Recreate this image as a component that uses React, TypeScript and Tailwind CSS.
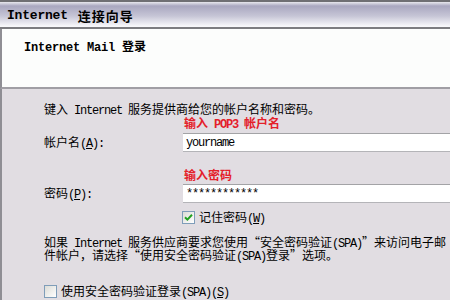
import React from "react";

const L = ({ children, cls = "" }: { children: React.ReactNode; cls?: string }) => (
  <span className={`font-['Liberation_Mono',monospace] leading-none tracking-[-1.2px] ${cls}`}>{children}</span>
);

const Check = ({ checked }: { checked: boolean }) => (
  <span className="inline-flex h-[13px] w-[13px] shrink-0 items-center justify-center border border-[#7f9db9] bg-gradient-to-br from-[#dcdcd7] to-[#ffffff]">
    {checked && (
      <svg width="9" height="9" viewBox="0 0 9 9">
        <path d="M1 4.2 L3.4 6.6 L8 1.8" stroke="#21a121" strokeWidth="2" fill="none" />
      </svg>
    )}
  </span>
);

export default function App() {
  return (
    <div className="h-[300px] w-[450px] overflow-hidden bg-[#e1dde2] font-['Noto_Sans_CJK_SC',sans-serif] text-[12px] text-black">
      {/* title bar */}
      <div className="flex h-[29px] items-center border-t-2 border-b-2 border-t-[#6f6f74] border-b-[#7c7c80] bg-[linear-gradient(to_bottom,#e8e8ee_0px,#a9a7c0_4px,#c6c5d6_14px,#f7f7fa_24px)] pl-[7px] pt-[3px] text-[13px] font-bold leading-[14px]">
        <span className="font-['Liberation_Mono',monospace] tracking-[-0.2px]">Internet</span>
        <span className="ml-[10px] tracking-[1px]">连接向导</span>
      </div>
      {/* header */}
      <div className="h-[60px] border-b-2 border-l-2 border-b-[#a09ea4] border-l-[#8f8e94] bg-[#fcfdfc] pl-[22px] pt-[10px] text-[12px] font-bold leading-[14px]">
        <span className="font-['Liberation_Mono',monospace] tracking-[-0.2px]">Internet Mail </span>
        <span>登录</span>
      </div>
      {/* body */}
      <div className="h-[211px] border-l-2 border-l-[#8f8e94] pl-[42px] pt-[13px] leading-[14px]">
        <div className="h-[14px] whitespace-nowrap">
          键入<L> Internet </L>服务提供商给您的帐户名称和密码。
        </div>
        <div className="flex h-[14px]">
          <div className="w-[139px] shrink-0" />
          <div className="whitespace-nowrap pl-[1px] font-bold text-[#e4202a]">
            输入<L cls="tracking-[-0.9px]"> POP3 </L>帐户名
          </div>
        </div>
        <div className="mt-[3px] flex h-[19px] items-center">
          <div className="w-[139px] shrink-0">
            帐户名<L>(<span className="underline">A</span>):</L>
          </div>
          <div className="flex h-[19px] flex-1 items-center border-t border-b border-t-[#a3a3a6] border-b-[#b4b4b8] bg-white pl-[3px]">
            <L>yourname</L>
          </div>
        </div>
        <div className="mt-[16px] flex h-[14px]">
          <div className="w-[139px] shrink-0" />
          <div className="pl-[1px] font-bold text-[#e4202a]">输入密码</div>
        </div>
        <div className="mt-[2px] flex h-[19px] items-center">
          <div className="w-[139px] shrink-0">
            密码<L>(<span className="underline">P</span>):</L>
          </div>
          <div className="flex h-[19px] flex-1 items-center border-t border-b border-t-[#a3a3a6] border-b-[#b4b4b8] bg-white pl-[3px]">
            <L>************</L>
          </div>
        </div>
        <div className="mt-[7px] flex h-[14px] items-center">
          <div className="w-[138px] shrink-0" />
          <Check checked />
          <span className="ml-[4px]">
            记住密码<L>(<span className="underline">W</span>)</L>
          </span>
        </div>
        <div className="mt-[11px] h-[13px] whitespace-nowrap leading-[13px]">
          如果<L> Internet </L>服务供应商要求您使用“安全密码验证<L>(SPA)</L>”来访问电子邮
        </div>
        <div className="h-[13px] whitespace-nowrap leading-[13px]">
          件帐户，请选择“使用安全密码验证<L>(SPA)</L>登录”选项。
        </div>
        <div className="mt-[23px] flex h-[14px] items-center">
          <Check checked={false} />
          <span className="ml-[4px]">
            使用安全密码验证登录<L>(SPA)</L>
            <L>(<span className="underline">S</span>)</L>
          </span>
        </div>
      </div>
    </div>
  );
}
